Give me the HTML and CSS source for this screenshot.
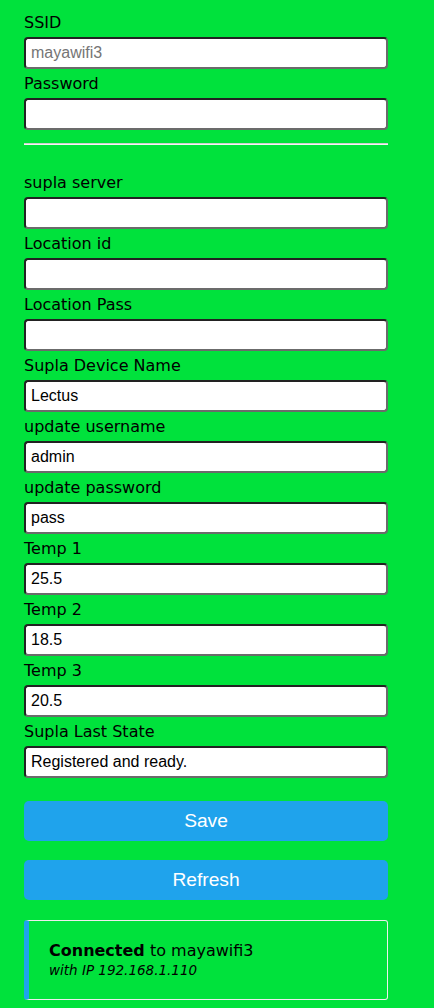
FILE: index.html
```html
<!DOCTYPE html>
<html>
<head>
<meta charset="utf-8">
<link rel="stylesheet" href="styles.css">
</head>
<body>
<div class="wrap">
  <form class="form">
    <label class="lbl">SSID</label>
    <input class="inp" type="text" placeholder="mayawifi3">
    <label class="lbl">Password</label>
    <input class="inp" type="password">
    <hr class="sep">
    <label class="lbl">supla server</label>
    <input class="inp" type="text">
    <label class="lbl">Location id</label>
    <input class="inp" type="text">
    <label class="lbl">Location Pass</label>
    <input class="inp" type="text">
    <label class="lbl">Supla Device Name</label>
    <input class="inp" type="text" value="Lectus">
    <label class="lbl">update username</label>
    <input class="inp" type="text" value="admin">
    <label class="lbl">update password</label>
    <input class="inp" type="text" value="pass">
    <label class="lbl">Temp 1</label>
    <input class="inp" type="text" value="25.5">
    <label class="lbl">Temp 2</label>
    <input class="inp" type="text" value="18.5">
    <label class="lbl">Temp 3</label>
    <input class="inp" type="text" value="20.5">
    <label class="lbl">Supla Last State</label>
    <input class="inp" type="text" value="Registered and ready.">
    <button class="btn btn-save" type="button">Save</button>
    <button class="btn btn-refresh" type="button">Refresh</button>
  </form>
  <div class="msg">
    <strong>Connected</strong> to mayawifi3<br>
    <em><small>with IP 192.168.1.110</small></em>
  </div>
</div>
</body>
</html>
```
FILE: styles.css
```css
html, body {
  margin: 0;
  padding: 0;
  background: #00e23c;
}
body {
  font-family: "DejaVu Sans", Verdana, sans-serif;
  font-size: 16px;
  color: #000;
}
.wrap {
  width: 364px;
  margin-left: 24px;
  padding-top: 13px;
}
.form {
  display: flex;
  flex-direction: column;
  margin: 0;
}
.lbl {
  display: block;
  line-height: 19px;
  height: 19px;
}
.inp {
  display: block;
  box-sizing: border-box;
  width: 100%;
  height: 32px;
  margin: 5px 0;
  padding: 5px;
  font-family: "Liberation Sans", Arial, sans-serif;
  font-size: 16px;
  color: #000;
  background: #fff;
  border: 2px solid;
  border-color: #222 #6b6b6b #6b6b6b #222;
  border-radius: 4px;
  outline: none;
}
.inp::placeholder {
  color: #757575;
}
.sep {
  margin: 8px 0 28px 0;
  height: 0;
  border: 0;
  border-top: 1px solid #cfcfcf;
  border-bottom: 1px solid #f4f4f4;
}
.btn {
  display: block;
  width: 100%;
  height: 40px;
  border: 0;
  border-radius: 5px;
  background: #1fa3ec;
  color: #fff;
  font-family: "Liberation Sans", Arial, sans-serif;
  font-size: 19.2px;
  padding: 0;
}
.btn-save {
  margin-top: 18px;
}
.btn-refresh {
  margin-top: 19px;
}
.msg {
  margin-top: 20px;
  padding: 20px;
  border: 1px solid #eee;
  border-left: 5px solid #1fa3ec;
  border-radius: 3px;
  line-height: normal;
}
.msg small {
  font-size: 13.5px;
}
```
